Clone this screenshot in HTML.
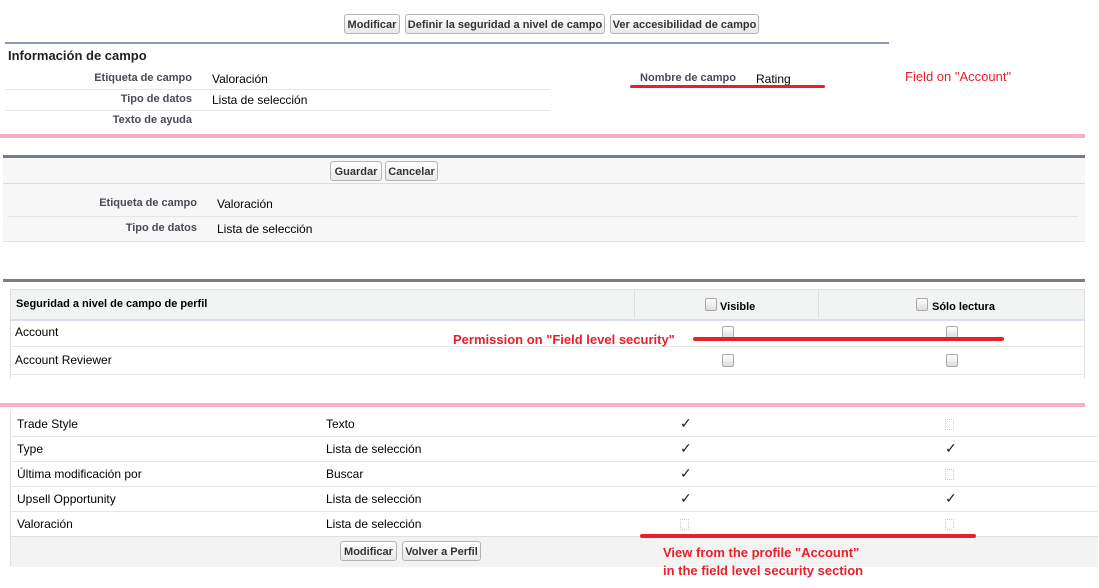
<!DOCTYPE html><html><head><style>
body{margin:0;width:1099px;height:588px;background:#fff;font-family:"Liberation Sans",sans-serif;font-size:12px;color:#000;position:relative;overflow:hidden}
div,span{position:absolute}
.btn{height:20px;border:1px solid #b5b5b5;border-radius:3px;background:linear-gradient(#fff,#e8e8e8);font-weight:bold;font-size:11px;color:#333;line-height:20px;text-align:center;box-sizing:border-box}
.lbl{font-weight:bold;font-size:11px;color:#4a4a56;text-align:right}
.red{color:#e8202a;font-weight:bold;font-size:13px}
.rl{background:#e8202a;height:4px;border-radius:2px}
.sep{height:1px;background:#e6e6e6}
.cb{width:10px;height:11px;border:1px solid #aaa;border-radius:2px;background:linear-gradient(#fff,#ddd)}
.ck{font-size:14px;color:#222}
.ecb{width:7px;height:9px;border:1px dotted #ccc}
</style></head><body>
<div class="btn" style="left:344px;top:14px;width:56px">Modificar</div>
<div class="btn" style="left:405px;top:14px;width:200px">Definir la seguridad a nivel de campo</div>
<div class="btn" style="left:610px;top:14px;width:149px">Ver accesibilidad de campo</div>
<div style="left:5px;top:42px;width:884px;height:2px;background:#8c9bb4"></div>
<div style="left:8px;top:48px;font-weight:bold;font-size:13px;color:#222">Información de campo</div>
<div class="lbl" style="left:0;width:192px;top:72px">Etiqueta de campo</div>
<div style="left:212px;top:72px">Valoración</div>
<div class="sep" style="left:5px;top:89px;width:545px"></div>
<div class="lbl" style="left:0;width:192px;top:93px">Tipo de datos</div>
<div style="left:212px;top:93px">Lista de selección</div>
<div class="sep" style="left:5px;top:110px;width:545px"></div>
<div class="lbl" style="left:0;width:192px;top:114px">Texto de ayuda</div>
<div class="lbl" style="left:600px;width:136px;top:72px">Nombre de campo</div>
<div style="left:756px;top:72px">Rating</div>
<div class="rl" style="left:630px;top:85px;width:195px;height:3px"></div>
<div class="red" style="left:905px;top:69px;font-weight:normal">Field on "Account"</div>
<div style="left:0;top:134px;width:1085px;height:4px;background:#f8afc8"></div>

<div style="left:3px;top:158px;width:1082px;height:83px;background:#f7f7f7;border-bottom:1px solid #e0e0e0"></div>
<div style="left:3px;top:155px;width:1082px;height:3px;background:#737c93"></div>
<div class="btn" style="left:330px;top:161px;width:52px">Guardar</div>
<div class="btn" style="left:385px;top:161px;width:53px">Cancelar</div>
<div class="sep" style="left:3px;top:183px;width:1082px;background:#ddd"></div>
<div class="lbl" style="left:0;width:197px;top:197px">Etiqueta de campo</div>
<div style="left:217px;top:197px">Valoración</div>
<div class="sep" style="left:7px;top:216px;width:1071px"></div>
<div class="lbl" style="left:0;width:197px;top:222px">Tipo de datos</div>
<div style="left:217px;top:222px">Lista de selección</div>

<div style="left:3px;top:279px;width:1082px;height:3px;background:#737c93"></div>
<div style="left:10px;top:289px;width:1073px;height:90px;border-left:1px solid #e0e0e0;border-right:1px solid #e0e0e0"></div>
<div style="left:10px;top:289px;width:1073px;height:29px;background:#f2f3f3;border:1px solid #e0e0e0;border-bottom:2px solid #dde"></div>
<div style="left:634px;top:290px;width:1px;height:28px;background:#e0e0e0"></div>
<div style="left:818px;top:290px;width:1px;height:28px;background:#e0e0e0"></div>
<div style="left:16px;top:298px;font-weight:bold;font-size:11px">Seguridad a nivel de campo de perfil</div>
<div class="cb" style="left:705px;top:298px"></div><div style="left:720px;top:301px;font-weight:bold;font-size:11px">Visible</div>
<div class="cb" style="left:916px;top:298px"></div><div style="left:932px;top:301px;font-weight:bold;font-size:11px">Sólo lectura</div>
<div style="left:15px;top:325px">Account</div>
<div class="cb" style="left:722px;top:326px"></div><div class="cb" style="left:946px;top:326px"></div>
<div class="sep" style="left:11px;top:346px;width:1072px"></div>
<div style="left:15px;top:353px">Account Reviewer</div>
<div class="cb" style="left:722px;top:354px"></div><div class="cb" style="left:946px;top:354px"></div>
<div class="sep" style="left:11px;top:374px;width:1072px"></div>
<div class="red" style="left:453px;top:332px">Permission on "Field level security"</div>
<div class="rl" style="left:693px;top:337px;width:311px"></div>
<div style="left:0;top:403px;width:1085px;height:4px;background:#f8afc8"></div>

<div style="left:10px;top:411px;width:1088px;height:155px;border-left:1px solid #e0e0e0;border-right:1px solid #e0e0e0"></div>
<div style="left:17px;top:417px">Trade Style</div><div style="left:326px;top:417px">Texto</div><div class="ck" style="left:680px;top:415px">✓</div><div class="ecb" style="left:945px;top:419px"></div>
<div class="sep" style="left:11px;top:436px;width:1087px"></div>
<div style="left:17px;top:442px">Type</div><div style="left:326px;top:442px">Lista de selección</div><div class="ck" style="left:680px;top:440px">✓</div><div class="ck" style="left:945px;top:440px">✓</div>
<div class="sep" style="left:11px;top:461px;width:1087px"></div>
<div style="left:17px;top:467px">Última modificación por</div><div style="left:326px;top:467px">Buscar</div><div class="ck" style="left:680px;top:465px">✓</div><div class="ecb" style="left:945px;top:469px"></div>
<div class="sep" style="left:11px;top:486px;width:1087px"></div>
<div style="left:17px;top:492px">Upsell Opportunity</div><div style="left:326px;top:492px">Lista de selección</div><div class="ck" style="left:680px;top:490px">✓</div><div class="ck" style="left:945px;top:490px">✓</div>
<div class="sep" style="left:11px;top:511px;width:1087px"></div>
<div style="left:17px;top:517px">Valoración</div><div style="left:326px;top:517px">Lista de selección</div><div class="ecb" style="left:680px;top:519px"></div><div class="ecb" style="left:945px;top:519px"></div>
<div style="left:11px;top:536px;width:1087px;height:30px;background:#f3f3f3;border-top:1px solid #e0e0e0"></div>
<div class="btn" style="left:340px;top:541px;width:57px">Modificar</div>
<div class="btn" style="left:402px;top:541px;width:79px">Volver a Perfil</div>
<div class="rl" style="left:640px;top:534px;width:336px"></div>
<div class="red" style="left:663px;top:545px">View from the profile "Account"</div>
<div class="red" style="left:663px;top:563px">in the field level security section</div>
</body></html>
